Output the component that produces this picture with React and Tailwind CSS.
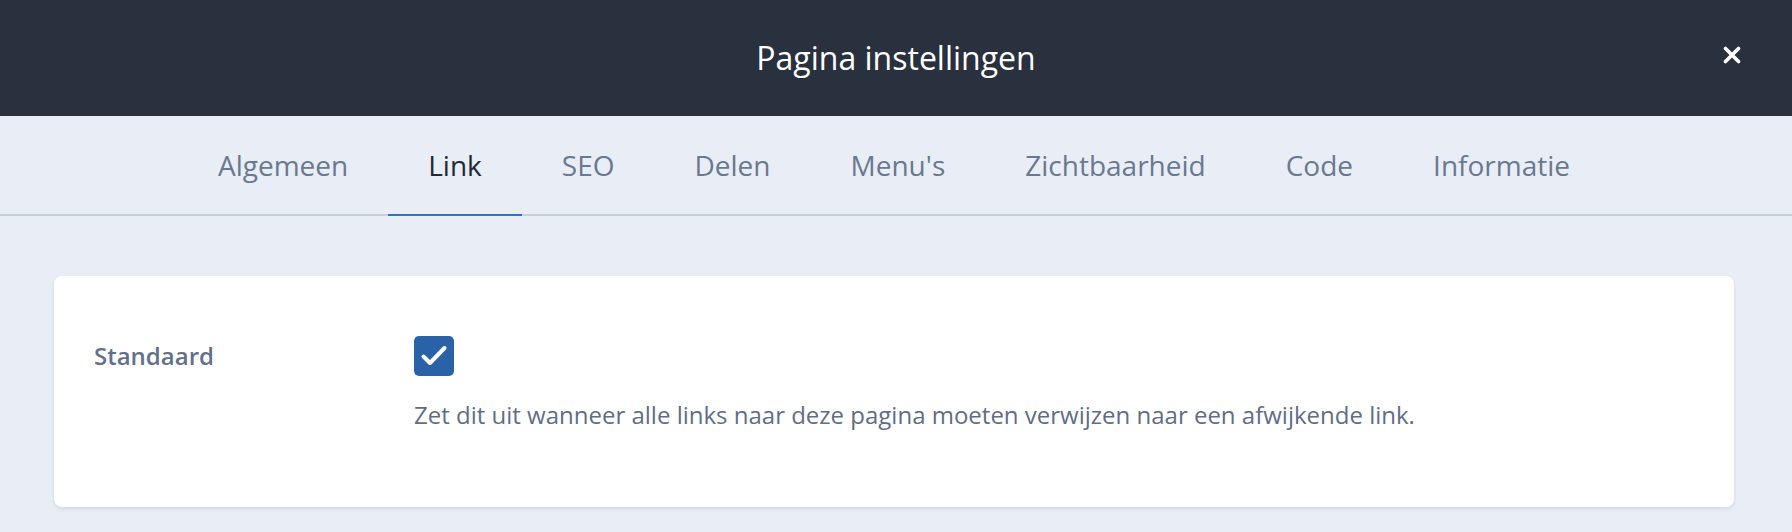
import React, { useState } from 'react';

const tabs = ['Algemeen', 'Link', 'SEO', 'Delen', "Menu's", 'Zichtbaarheid', 'Code', 'Informatie'];

const CloseIcon = () => (
  <svg width="18" height="18" viewBox="0 0 18 18" fill="none">
    <path d="M2.5 2.5L15.5 15.5M15.5 2.5L2.5 15.5" stroke="white" strokeWidth="3.6" strokeLinecap="round" />
  </svg>
);

const App = () => {
  const [activeTab, setActiveTab] = useState('Link');
  const [isDefault, setIsDefault] = useState(true);

  return (
    <div className="min-h-[532px] bg-[#e9eef6] font-['Open_Sans',sans-serif]">
      {/* Header */}
      <header className="relative h-[116px] bg-[#29303e] flex items-center justify-center">
        <h1 className="text-[32px] text-white font-normal">Pagina instellingen</h1>
        <button className="absolute right-[51px] top-[46px]" title="Sluiten">
          <CloseIcon />
        </button>
      </header>

      {/* Tabs */}
      <nav className="flex justify-center pr-[4px] border-b-2 border-[#c7d1de]">
        {tabs.map((tab) => (
          <button
            key={tab}
            onClick={() => setActiveTab(tab)}
            className={
              tab === activeTab
                ? 'h-[100px] px-[40px] text-[28px] leading-[40px] text-[#222a37] -mb-[2px] border-b-2 border-[#2e72c6]'
                : 'h-[100px] px-[40px] text-[28px] leading-[40px] text-[#6a7891] -mb-[2px] border-b-2 border-transparent'
            }
          >
            {tab}
          </button>
        ))}
      </nav>

      {/* Content */}
      <main className="pl-[54px] pr-[58px] pt-[60px] pb-[25px]">
        <div className="bg-white rounded-lg shadow-[0_2px_4px_rgba(40,60,90,0.12)] px-[40px] pt-[60px] pb-[74px]">
          <div className="flex">
            <div className="w-[320px] text-[24px] leading-[40px] font-semibold text-[#627189]">
              Standaard
            </div>
            <div className="flex flex-col">
              <button
                onClick={() => setIsDefault(!isDefault)}
                className={
                  isDefault
                    ? 'w-[40px] h-[40px] rounded-[5px] bg-[#2a62a7] flex items-center justify-center'
                    : 'w-[40px] h-[40px] rounded-[5px] bg-white border-2 border-[#c7d1de] flex items-center justify-center'
                }
              >
                {isDefault && (
                  <svg width="40" height="40" viewBox="0 0 40 40" fill="none">
                    <path d="M9.5 20.5L16 27L30.5 12" stroke="white" strokeWidth="4" strokeLinecap="round" strokeLinejoin="round" />
                  </svg>
                )}
              </button>
              <p className="mt-[21px] text-[24px] leading-[36px] text-[#5f6e86]">
                Zet dit uit wanneer alle links naar deze pagina moeten verwijzen naar een afwijkende link.
              </p>
            </div>
          </div>
        </div>
      </main>
    </div>
  );
};

export default App;
